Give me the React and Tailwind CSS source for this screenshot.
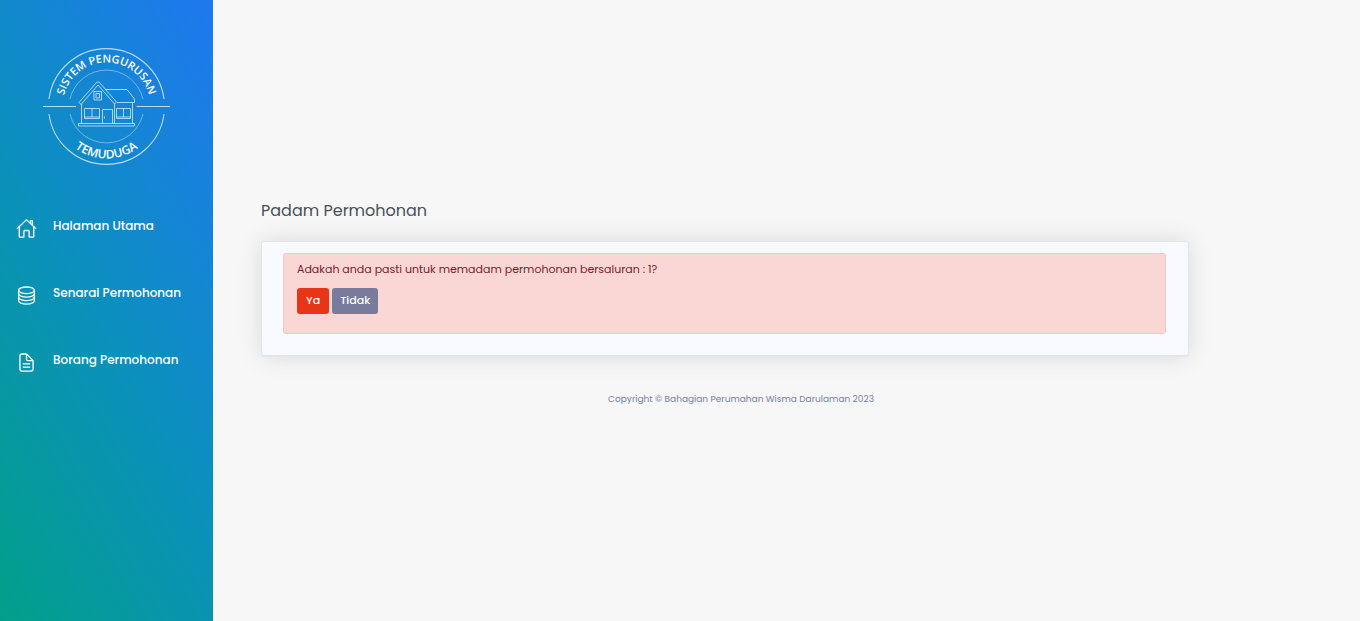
import { IoHomeOutline, IoServerOutline, IoDocumentTextOutline } from "react-icons/io5";

const links = [
  { label: "Halaman Utama", Icon: IoHomeOutline },
  { label: "Senarai Permohonan", Icon: IoServerOutline },
  { label: "Borang Permohonan", Icon: IoDocumentTextOutline },
];

function Logo() {
  return (
    <svg viewBox="0 0 128 120" className="h-[120px] w-32" fill="none" stroke="#ffffff" role="img" aria-label="Sistem Pengurusan Temuduga">
      <defs>
        <path id="arc-top" d="M19.500 60.500 A44 44 0 0 1 107.500 60.500" />
        <path id="arc-bottom" d="M11.500 60.500 A52 52 0 0 0 115.500 60.500" />
      </defs>
      <g strokeWidth="1.1" strokeOpacity="0.7">
        <path d="M6 53 A58 58 0 0 1 121 53" />
        <path d="M6 68 A58 58 0 0 0 121 68" />
        <path d="M0 60.500 H33 M93.500 60.500 H127" />
      </g>
      <g strokeWidth="0.8" strokeOpacity="0.5">
        <path d="M27 53 A37.500 37.500 0 0 1 100 53" />
        <path d="M27 68 A37.500 37.500 0 0 0 100 68" />
      </g>
      <g strokeWidth="1" strokeOpacity="0.65">
        <path d="M36 56.500 L53.500 36.500 Q55 35 56.500 36.500 L73.500 56 L71.500 58 L55 39 L38 58.500 Z" />
        <path d="M62 43.500 H84 L91.500 53 V56.500 H74" />
        <path d="M38.500 58 V77.500 M71.500 58 V77.500 M89.500 57 V77.500" />
        <path d="M35.500 77.500 H91.500 V80 H35.500 Z" />
        <path d="M51 45.500 H58.500 V54 H51 Z M53 47.500 H56.500 V52 H53 Z" />
        <path d="M41.500 62.500 H56.500 V72.500 H41.500 Z M49 62.500 V71 M41.500 71 H56.500" />
        <path d="M73.500 62.500 H87.500 V72.500 H73.500 Z M80.500 62.500 V71 M73.500 71 H87.500" />
        <path d="M59.500 77.500 V63.500 H69.500 V77.500 M61.500 70.500 V72.500" />
      </g>
      <g fill="#ffffff" stroke="none" fontFamily="Open Sans, sans-serif" fontWeight="600" textAnchor="middle">
        <text fontSize="11">
          <textPath href="#arc-top" startOffset="50%">SISTEM PENGURUSAN</textPath>
        </text>
        <text fontSize="12">
          <textPath href="#arc-bottom" startOffset="50%">TEMUDUGA</textPath>
        </text>
      </g>
    </svg>
  );
}

export default function App() {
  return (
    <div className="flex min-h-screen bg-[#f7f7f7] font-['Poppins','Inter',sans-serif]">
      <aside className="w-[213px] shrink-0 bg-[linear-gradient(60deg,#02a089,#0c8fbe_50%,#1f78f0)] pt-[46px] text-white">
        <div className="flex justify-center">
          <Logo />
        </div>
        <nav className="mt-[50px] flex flex-col gap-[43px]">
          {links.map(({ label, Icon }) => (
            <a key={label} href="#" className="flex h-6 items-start pl-4 text-[12px] leading-5 font-medium">
              <Icon aria-hidden="true" className="mt-[2px] mr-4 size-[21px]" />
              {label}
            </a>
          ))}
        </nav>
      </aside>
      <main className="min-w-0 grow pt-[199px] pr-[171px] pl-12">
        <h1 className="text-[16px] leading-6 text-[#495057]">Padam Permohonan</h1>
        <section className="mt-[18px] rounded-[3px] border border-b-2 border-[#e0e5f2] bg-[#f8faff] pt-[11px] pr-[22px] pb-[21px] pl-[21px] shadow-[0_0_24px_rgba(0,0,0,0.12)]">
          <div className="rounded-[3px] border border-[#f8c6c4] bg-[#fad6d4] px-[13px] pt-[6px] pb-[19px]">
            <p className="text-[11px] leading-[18px] text-[#781c2e]">
              Adakah anda pasti untuk memadam permohonan bersaluran : 1?
            </p>
            <div className="mt-[10px] flex gap-[3px] text-[11px] leading-4 font-medium text-white">
              <button type="button" className="rounded-[3px] bg-[#e93517] px-[9px] pt-1 pb-1.5">Ya</button>
              <button type="button" className="rounded-[3px] bg-[#787b9c] px-2 pt-1 pb-1.5">Tidak</button>
            </div>
          </div>
        </section>
        <footer className="mt-[35px] pl-8 text-center text-[9px] leading-[14px] text-[#7780a8]">
          Copyright © Bahagian Perumahan Wisma Darulaman 2023
        </footer>
      </main>
    </div>
  );
}
